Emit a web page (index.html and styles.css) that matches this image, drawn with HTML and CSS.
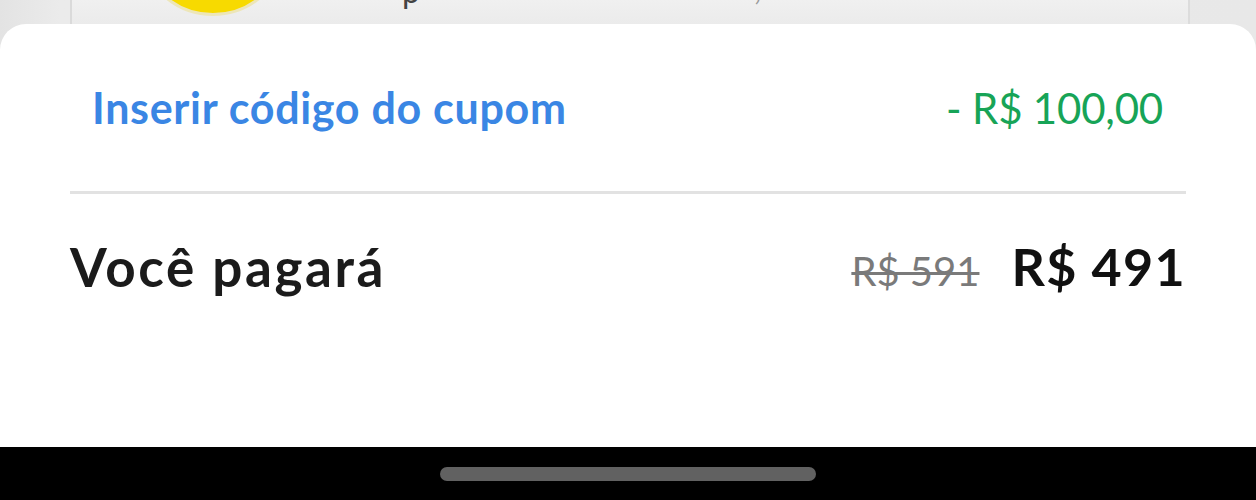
FILE: index.html
```html
<!DOCTYPE html>
<html lang="pt-BR">
<head>
    <meta charset="utf-8">
    <title>Resumo do pedido</title>
    <link rel="stylesheet" href="styles.css">
</head>
<body>
    <div class="peek">
        <div class="peek-card">
            <div class="peek-row">
                <span class="peek-logo"></span>
                <span class="peek-text peek-a">p</span>
                <span class="peek-text peek-b">,</span>
            </div>
        </div>
    </div>

    <div class="sheet">
        <div class="coupon-row">
            <a class="coupon-link">Inserir código do cupom</a>
            <span class="coupon-value">- R$ 100,00</span>
        </div>
        <hr class="divider">
        <div class="total-row">
            <span class="total-label">Você pagará</span>
            <div class="total-prices">
                <span class="price-old">R$ 591</span>
                <span class="price-new">R$ 491</span>
            </div>
        </div>
    </div>

    <div class="home-bar">
        <span class="home-indicator"></span>
    </div>
</body>
</html>
```

FILE: styles.css
```css
html, body {
    margin: 0;
    padding: 0;
}

body {
    width: 1256px;
    height: 500px;
    overflow: hidden;
    display: flex;
    flex-direction: column;
    background: linear-gradient(to right, #e3e3e3, #ebebeb 60px, #e8e8e8);
    font-family: Lato, "Noto Sans", sans-serif;
}

/* card behind the sheet, only its bottom edge shows */
.peek {
    height: 24px;
    flex: none;
    display: flex;
    justify-content: center;
    overflow: hidden;
}

.peek-card {
    width: 1116px;
    margin-left: 4px;
    height: 24px;
    display: flex;
    align-items: flex-end;
    background: linear-gradient(#f0f0f0, #ebebeb);
    border-left: 2px solid #dadada;
    border-right: 2px solid #dcdcdc;
}

.peek-row {
    display: flex;
    align-items: flex-end;
    margin-bottom: 8px;
    height: 200px;
}

.peek-logo {
    width: 150px;
    height: 150px;
    margin-left: 66px;
    border-radius: 50%;
    background: #f7da00;
    border: 3px solid #ede6b8;
    box-sizing: border-box;
    flex: none;
}

.peek-text {
    font-size: 32px;
    color: #444;
    line-height: 1;
    margin-bottom: 9px;
}

.peek-a {
    margin-left: 114px;
}

.peek-b {
    margin-left: 334px;
    color: #999;
    margin-bottom: 12px;
}

.sheet {
    flex: 1;
    background: #fff;
    border-radius: 26px 26px 0 0;
    padding: 0 70px;
    display: flex;
    flex-direction: column;
}

.coupon-row {
    height: 167px;
    padding: 0 23px 0 22px;
    display: flex;
    align-items: center;
    justify-content: space-between;
}

.coupon-link {
    color: #3a86e4;
    font-size: 43px;
    font-weight: 700;
    letter-spacing: 0.7px;
    cursor: pointer;
}

.coupon-value {
    color: #17a457;
    font-size: 42px;
    font-weight: 400;
    letter-spacing: -0.2px;
}

.divider {
    margin: 0;
    border: 0;
    height: 3px;
    background: #e2e2e2;
}

.total-row {
    height: 144px;
    padding-bottom: 16px;
    display: flex;
    align-items: center;
    justify-content: space-between;
}

.total-label {
    font-size: 53px;
    font-weight: 700;
    color: #1b1b1b;
    letter-spacing: 2.6px;
}

.total-prices {
    display: flex;
    align-items: baseline;
    gap: 32px;
}

.price-old {
    font-size: 40px;
    color: #7a7a7a;
    text-decoration: line-through;
    text-decoration-thickness: 3px;
}

.price-new {
    font-size: 52px;
    font-weight: 700;
    color: #111;
    letter-spacing: 1.3px;
}

.home-bar {
    height: 53px;
    flex: none;
    background: #000;
    display: flex;
    justify-content: center;
    align-items: flex-start;
}

.home-indicator {
    width: 376px;
    height: 14px;
    margin-top: 20px;
    border-radius: 7px;
    background: #616161;
}
```
